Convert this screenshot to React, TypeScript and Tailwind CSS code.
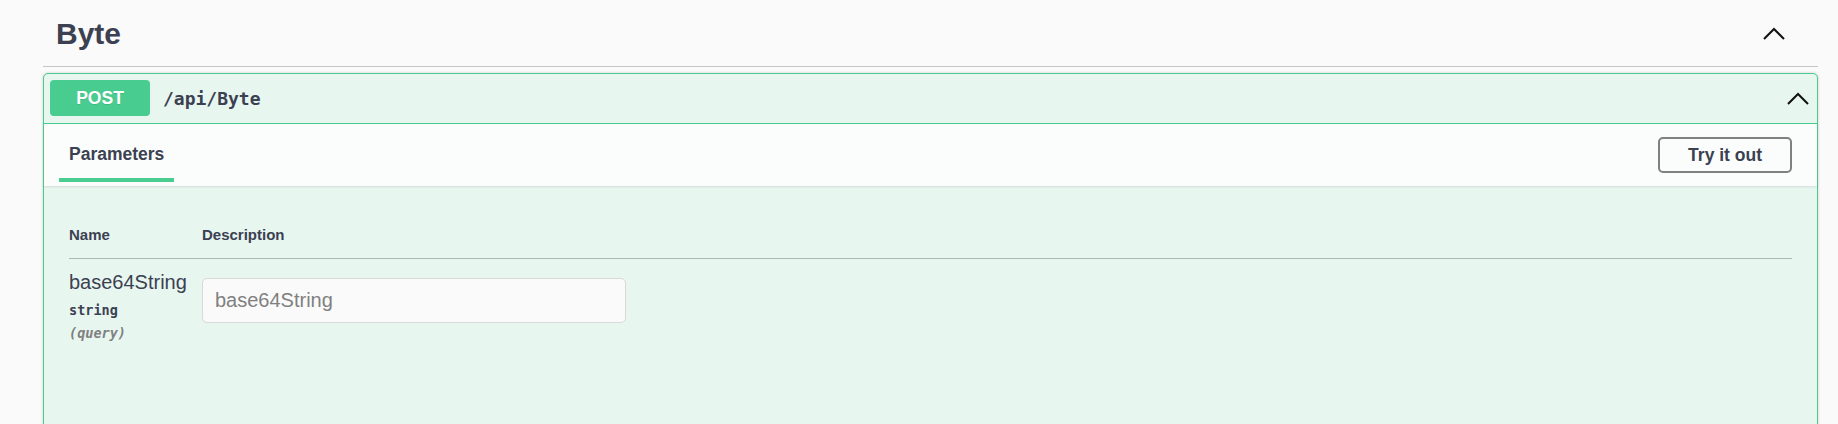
import React from 'react';

const ChevronUp: React.FC = () => (
  <svg width="22" height="13" viewBox="0 0 22 13" fill="none" xmlns="http://www.w3.org/2000/svg">
    <polyline points="1,12 11,2 21,12" stroke="#111" strokeWidth={2} />
  </svg>
);

const App: React.FC = () => {
  return (
    <div
      className="h-[424px] overflow-hidden bg-[#fafafa] text-[#3b4151]"
      style={{ fontFamily: '"Liberation Sans", Arial, sans-serif' }}
    >
      <div className="ml-[43px] mr-[20px]">
        {/* Tag header */}
        <div className="flex items-start justify-between h-[67px] border-b border-[#c4c5c9]">
          <h3 className="pt-[16px] pl-[13px] text-[30px] leading-[36px] font-bold">Byte</h3>
          <div className="mt-[27px] mr-[33px]">
            <ChevronUp />
          </div>
        </div>

        {/* Operation block */}
        <div className="mt-[6px] border border-[#49cc90] rounded-[5px] bg-[#e8f6f0] shadow-[0_0_3px_rgba(0,0,0,0.19)]">
          <div className="flex items-center pt-[6px] pb-[7px] px-[6px] border-b border-[#49cc90]">
            <span className="w-[100px] h-[36px] rounded-[4px] bg-[#49cc90] text-white text-[17.5px] font-bold flex items-center justify-center [text-shadow:0_1px_0_rgba(0,0,0,0.1)]">
              POST
            </span>
            <span
              className="ml-[13px] text-[18px] font-bold text-[#3b4151]"
              style={{ fontFamily: '"DejaVu Sans Mono", monospace' }}
            >
              /api/Byte
            </span>
            <div className="ml-auto mr-[2px] mt-[1px]">
              <ChevronUp />
            </div>
          </div>

          {/* Section header */}
          <div className="flex items-center justify-between px-[25px] bg-[#fafdfc] shadow-[0_1px_2px_rgba(0,0,0,0.1)]">
            <div className="flex flex-col pt-[19.5px] pb-[4px]">
              <h4 className="text-[17.5px] leading-[20px] font-bold">Parameters</h4>
              <div className="-mx-[10px] mt-[14.5px] h-[4px] bg-[#49cc90]" />
            </div>
            <button className="h-[36px] px-[28px] border-2 border-[#808080] rounded-[5px] text-[17.5px] font-bold text-[#3b4151]">
              Try it out
            </button>
          </div>

          {/* Parameters table */}
          <div className="px-[25px] pt-[39.5px] pb-[120px]">
            <div className="flex border-b border-[#adb8b8] pb-[14.5px] text-[15px] leading-[18px] font-bold">
              <div className="w-[133px]">Name</div>
              <div>Description</div>
            </div>
            <div className="flex pt-[12px]">
              <div className="w-[133px] flex flex-col">
                <div className="text-[20px] leading-[23px]">base64String</div>
                <div
                  className="mt-[7px] text-[13.5px] leading-[18px] font-bold"
                  style={{ fontFamily: '"DejaVu Sans Mono", monospace' }}
                >
                  string
                </div>
                <div
                  className="mt-[5px] text-[13.5px] leading-[18px] italic text-[#808080] font-semibold"
                  style={{ fontFamily: '"DejaVu Sans Mono", monospace' }}
                >
                  (query)
                </div>
              </div>
              <div className="pt-[7px]">
                <input
                  type="text"
                  placeholder="base64String"
                  className="w-[424px] h-[45px] border border-[#d9d9d9] rounded-[5px] bg-[#fafafa] pl-[12px] text-[20px] placeholder:text-[#808080] outline-none"
                />
              </div>
            </div>
          </div>
        </div>
      </div>
    </div>
  );
};

export default App;
